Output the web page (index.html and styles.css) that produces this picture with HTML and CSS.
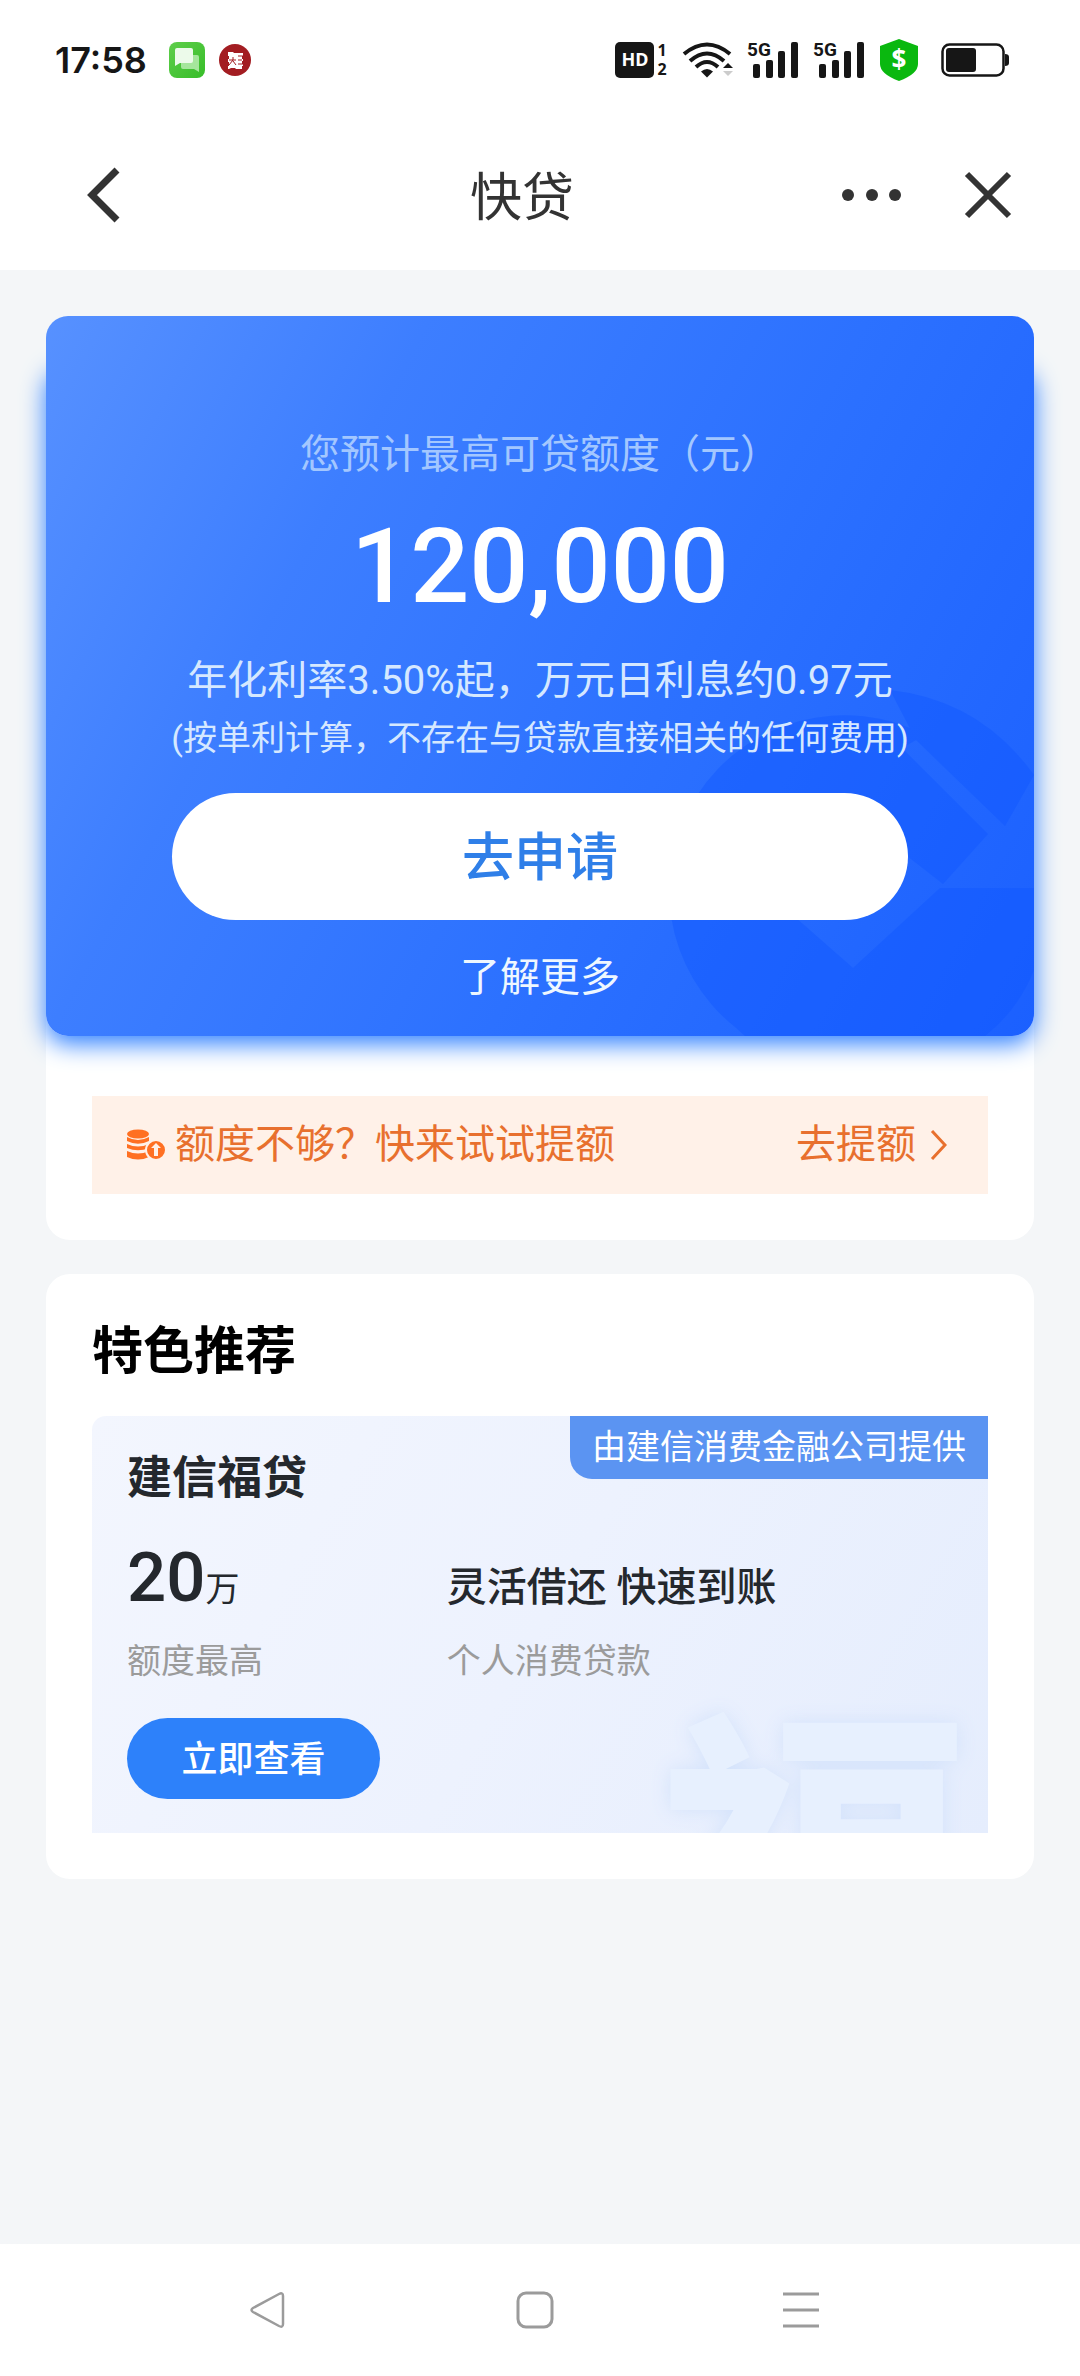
FILE: index.html
```html
<!DOCTYPE html>
<html lang="zh-CN">
<head>
<meta charset="utf-8">
<meta name="viewport" content="width=device-width, initial-scale=1">
<title>快贷</title>
<link rel="stylesheet" href="styles.css">
</head>
<body>
<div class="status">
  <span class="status-time">17:58</span>
  <svg class="status-app" width="36" height="36" viewBox="0 0 36 36" aria-hidden="true">
    <defs><linearGradient id="msg" x1="0" y1="0" x2="1" y2="1"><stop offset="0" stop-color="#5fce4b"/><stop offset="1" stop-color="#36bd28"/></linearGradient></defs>
    <rect width="36" height="36" rx="8" fill="url(#msg)"/>
    <path d="M12 13h16a2 2 0 0 1 2 2v15l-5-3H14a2 2 0 0 1-2-2z" fill="#a5e69c"/>
    <path d="M8 6h14a2 2 0 0 1 2 2v11a2 2 0 0 1-2 2H11l-5 3V8a2 2 0 0 1 2-2z" fill="#ecfaea"/>
  </svg>
  <svg class="status-seal" width="32" height="32" viewBox="0 0 32 32" aria-hidden="true">
    <circle cx="16" cy="16" r="16" fill="#a31d22"/>
    <path d="M9 8h5l1 1h9v3h-1v3h1v2h-1v3h1v2h-1v3h-6l-1-1h-4l-2 1H9v-3h1v-4H9v-3h1v-3H9z" fill="#fff"/>
    <path d="M10 16h7M14 13v3l-4 5M14 17l3 4M19 12h5M19 16h4M19 20h5" fill="none" stroke="#a31d22"/>
  </svg>
  <svg class="status-system" width="304" height="44" viewBox="0 0 304 44" role="img" aria-label="系统状态">
    <g fill="#161616">
      <rect y="4" width="39" height="36" rx="5"/>
      <text x="20" y="28" fill="#fff" font-size="18" text-anchor="middle" class="glyph">HD</text>
      <text x="47" y="18" font-size="16" text-anchor="middle" class="glyph">1</text>
      <text x="47" y="37" font-size="16" text-anchor="middle" class="glyph">2</text>
      <g fill="none" stroke="#161616" stroke-width="4">
        <path d="M69 16Q92 -3 115 16"/><path d="M75 23Q92 8 109 23"/><path d="M81 29Q92 19 103 29"/>
      </g>
      <path d="M92 39.500l-6-6q6-5 12 0z"/>
      <path d="M108 30l5-5 5 5z"/><path d="M108 33h10l-5 5z" fill="#ccc"/>
      <g id="signal">
        <text x="132" y="18" font-size="19" class="narrow">5G</text>
        <rect x="138" y="26" width="7" height="14" rx="2"/><rect x="151" y="22" width="7" height="18" rx="2"/>
        <rect x="163" y="13" width="7" height="27" rx="2"/><rect x="176" y="4" width="7" height="36" rx="2"/>
      </g>
      <use href="#signal" x="66"/>
      <path d="M284 1l19 7v18q0 10-19 17-19-7-19-17V8z" fill="#0ab80f"/>
      <text x="284" y="31" font-size="26" fill="#fff" text-anchor="middle" class="glyph">$</text>
    </g>
  </svg>
  <svg class="status-battery" width="68" height="34" viewBox="0 0 68 34" role="img" aria-label="电量">
    <rect x="1.500" y="1.500" width="61" height="31" rx="7" fill="none" stroke="#161616" stroke-width="2.500"/>
    <rect x="5" y="5" width="30" height="24" rx="3" fill="#161616"/>
    <path d="M64 11q4 0 4 3v6q0 3-4 3z" fill="#161616"/>
  </svg>
</div>

<header class="header">
  <button class="icon-button" type="button" aria-label="返回">
    <svg width="34" height="56" viewBox="0 0 34 56"><path d="M31 3L6 28l25 25" fill="none" stroke="#333" stroke-width="7"/></svg>
  </button>
  <h1 class="header-title">快贷</h1>
  <div class="header-actions">
    <button class="icon-button" type="button" aria-label="更多">
      <svg width="60" height="12" viewBox="0 0 60 12" fill="#333"><circle cx="6" cy="6" r="6"/><circle cx="30" cy="6" r="6"/><circle cx="53" cy="6" r="6"/></svg>
    </button>
    <button class="icon-button" type="button" aria-label="关闭">
      <svg width="48" height="48" viewBox="0 0 48 48"><path d="M3 3l42 42M45 3L3 45" fill="none" stroke="#333" stroke-width="6"/></svg>
    </button>
  </div>
</header>

<main class="content">
  <section class="card offer">
    <div class="hero">
      <svg class="hero-mark" width="394" height="396" viewBox="0 0 394 396" aria-hidden="true">
        <path d="M285 95A175 175 0 0 0 95 387L105 396H345Q378 370 394 330V248H300L213 328 130 255 213 175 262 212 303 244 348 194 262 108z"/>
        <path d="M250 50Q340 60 394 135L365 186 276 100z"/>
      </svg>
      <p class="hero-label">您预计最高可贷额度（元）</p>
      <p class="hero-amount">120,000</p>
      <p class="hero-rate">年化利率3.50%起，万元日利息约0.97元</p>
      <p class="hero-note">(按单利计算，不存在与贷款直接相关的任何费用)</p>
      <button class="hero-apply" type="button">去申请</button>
      <a class="hero-more" href="#">了解更多</a>
    </div>
    <a class="notice" href="#">
      <svg width="40" height="32" viewBox="0 0 40 32" aria-hidden="true">
        <g fill="#ff7022">
          <ellipse cx="12" cy="5" rx="11" ry="4.500"/>
          <path d="M1 8q11 6 22 0v4q-11 5.500-22 0zM1 15q11 5 22 0v4q-11 4.500-22 0zM1 22q11 5 22 0v6q-11 5-22 0z"/>
        </g>
        <circle cx="30" cy="21" r="10" fill="#ff7022" stroke="#fff1e8" stroke-width="2"/>
        <path d="M30 14l5 5h-3v8h-4v-8h-3z" fill="#fff1e8"/>
      </svg>
      <span class="notice-text">额度不够？快来试试提额</span>
      <span>去提额</span>
      <svg class="notice-arrow" width="17" height="30" viewBox="0 0 17 30" aria-hidden="true"><path d="M2 1l13 14L2 29" fill="none" stroke="#e8702e" stroke-width="3"/></svg>
    </a>
  </section>

  <section class="card picks">
    <h2 class="picks-title">特色推荐</h2>
    <article class="product">
      <span class="product-mark" aria-hidden="true">福</span>
      <span class="product-tag">由建信消费金融公司提供</span>
      <h3 class="product-name">建信福贷</h3>
      <div class="product-facts">
        <p class="product-amount">20<small>万</small></p>
        <p class="product-benefit">灵活借还 快速到账</p>
        <p class="product-caption">额度最高</p>
        <p class="product-caption">个人消费贷款</p>
      </div>
      <button class="product-view" type="button">立即查看</button>
    </article>
  </section>
</main>

<nav class="system-nav" aria-label="系统导航">
  <button class="icon-button" type="button" aria-label="后退">
    <svg width="36" height="38" viewBox="0 0 36 38" fill="none" stroke="#9b9b9b" stroke-width="2.500"><path d="M3 17L29 3q4-2 4 2v28q0 4-4 2L3 21q-3-2 0-4z"/></svg>
  </button>
  <button class="icon-button" type="button" aria-label="主页">
    <svg width="38" height="38" viewBox="0 0 38 38" fill="none" stroke="#9b9b9b" stroke-width="3"><rect x="2" y="2" width="34" height="34" rx="8"/></svg>
  </button>
  <button class="icon-button" type="button" aria-label="最近任务">
    <svg width="36" height="38" viewBox="0 0 36 38" stroke="#9b9b9b" stroke-width="3"><path d="M0 3h36M0 19h36M0 35h36"/></svg>
  </button>
</nav>
</body>
</html>
```
FILE: styles.css
```css
* {
  box-sizing: border-box;
}

body {
  margin: 0;
  min-height: 100vh;
  display: flex;
  flex-direction: column;
  background: #f4f6f8;
  color: #24282d;
  font-family: Roboto, "Noto Sans CJK SC", sans-serif;
}

h1, h2, h3, p {
  margin: 0;
}

button {
  border: 0;
  padding: 0;
  font-family: inherit;
  cursor: pointer;
}

a {
  color: inherit;
  text-decoration: none;
}

svg {
  display: block;
  flex: none;
}

.icon-button {
  display: flex;
  background: none;
}

/* Status bar */
.status {
  display: flex;
  align-items: center;
  height: 120px;
  padding: 0 71px 0 55px;
  background: #fff;
}

.status-time {
  width: 114px;
  color: #161616;
  font: 600 36px/44px Inter, sans-serif;
}

.status-seal {
  margin-left: 14px;
}

.status-system {
  margin-left: auto;
}

.status-battery {
  margin-left: 22px;
}

.glyph {
  font-family: "Noto Sans", sans-serif;
  font-weight: 700;
}

.narrow {
  font-family: Roboto, sans-serif;
  font-weight: 700;
}

/* Page header */
.header {
  display: grid;
  grid-template-columns: 1fr auto 1fr;
  align-items: center;
  height: 150px;
  padding: 0 68px 0 86px;
  background: #fff;
}

.header-title {
  margin-top: 8px;
  margin-right: 54px;
  color: #333;
  font-size: 52px;
  font-weight: 400;
  line-height: 76px;
}

.header-actions {
  display: flex;
  justify-content: flex-end;
  align-items: center;
  gap: 62px;
}

/* Content */
.content {
  flex: 1;
  display: flex;
  flex-direction: column;
  gap: 34px;
  padding: 46px;
}

.card {
  border-radius: 24px;
  background: #fff;
}

.offer {
  position: relative;
  z-index: 0;
  padding-bottom: 46px;
}

.hero {
  position: relative;
  display: flex;
  flex-direction: column;
  align-items: center;
  padding: 109px 0 28px;
  border-radius: 22px;
  background: linear-gradient(118deg, #5791ff, #3d7eff 28%, #2c71ff 60%, #1b60ff);
  color: #d5e8ff;
  text-align: center;
}

/* The glow starts below the top edge of the panel */
.hero::before {
  content: "";
  position: absolute;
  inset: 46px 0 0;
  z-index: -1;
  border-radius: 22px;
  box-shadow: 0 8px 24px #2f80ff;
}

.hero > * {
  position: relative;
}

.hero .hero-mark {
  position: absolute;
  right: 0;
  bottom: 0;
  border-radius: 0 0 22px;
  fill: #0f56ff;
  opacity: 0.4;
}

.hero-label {
  color: #a3c7ff;
  font-size: 40px;
  line-height: 60px;
}

.hero-amount {
  margin-top: 22px;
  color: #fff;
  font-size: 104px;
  font-weight: 500;
  line-height: 120px;
}

.hero-rate {
  margin-top: 24px;
  font-size: 40px;
  line-height: 60px;
}

.hero-note {
  font-size: 34px;
  line-height: 54px;
}

.hero-apply {
  width: 74.4%;
  height: 127px;
  margin-top: 28px;
  padding-bottom: 6px;
  border-radius: 64px;
  background: #fff;
  color: #2f7fe8;
  font-size: 52px;
  font-weight: 500;
}

.hero-more {
  margin-top: 28px;
  color: #eef7ff;
  font-size: 40px;
  line-height: 60px;
}

.notice {
  display: flex;
  align-items: center;
  height: 98px;
  margin: 60px 46px 0;
  padding: 0 41px 0 34px;
  background: #fff1e8;
  color: #e8702e;
  font-size: 40px;
  line-height: 60px;
}

.notice-text {
  flex: 1;
  margin-left: 9px;
}

.notice-arrow {
  margin-left: 14px;
}

/* Recommendations */
.picks {
  padding: 40px 46px 46px;
}

.picks-title {
  color: #000;
  font-size: 51px;
  font-weight: 700;
  line-height: 76px;
}

.product {
  position: relative;
  overflow: hidden;
  margin-top: 26px;
  padding: 33px 35px 34px;
  border-radius: 14px 0 0;
  background: linear-gradient(120deg, #f3f6fe, #edf2fe 50%, #e5edfd);
}

.product > * {
  position: relative;
}

.product .product-mark {
  position: absolute;
  right: 16px;
  bottom: -198px;
  color: #e7f0fe;
  font-size: 316px;
  font-weight: 900;
  line-height: 316px;
  text-shadow: 0 0 20px #d3e2fb;
}

.product .product-tag {
  position: absolute;
  top: 0;
  right: 0;
  padding: 0 22px;
  border-bottom-left-radius: 22px;
  background: #5b94f2;
  color: #fff;
  font-size: 34px;
  line-height: 63px;
}

.product-name {
  font-size: 45px;
  font-weight: 700;
  line-height: 60px;
}

.product-facts {
  display: grid;
  grid-template-columns: 38.7% 1fr;
  align-items: baseline;
  row-gap: 14px;
  margin-top: 24px;
}

.product-amount {
  font-size: 69px;
  font-weight: 500;
  line-height: 90px;
}

.product-amount small {
  font-size: 34px;
  font-weight: 400;
  line-height: 34px;
}

.product-benefit {
  font-size: 40px;
  font-weight: 500;
  line-height: 60px;
}

.product-caption {
  color: #9b9b9b;
  font-size: 34px;
  line-height: 48px;
}

.product-view {
  display: block;
  width: 253px;
  height: 81px;
  margin-top: 33px;
  padding-bottom: 6px;
  border-radius: 41px;
  background: #2d81fa;
  color: #fff;
  font-size: 36px;
  font-weight: 500;
}

/* System navigation */
.system-nav {
  display: grid;
  grid-template-columns: repeat(3, 1fr);
  place-items: center;
  height: 132px;
  padding: 0 13.5% 0 12.5%;
  background: #fff;
}
```
